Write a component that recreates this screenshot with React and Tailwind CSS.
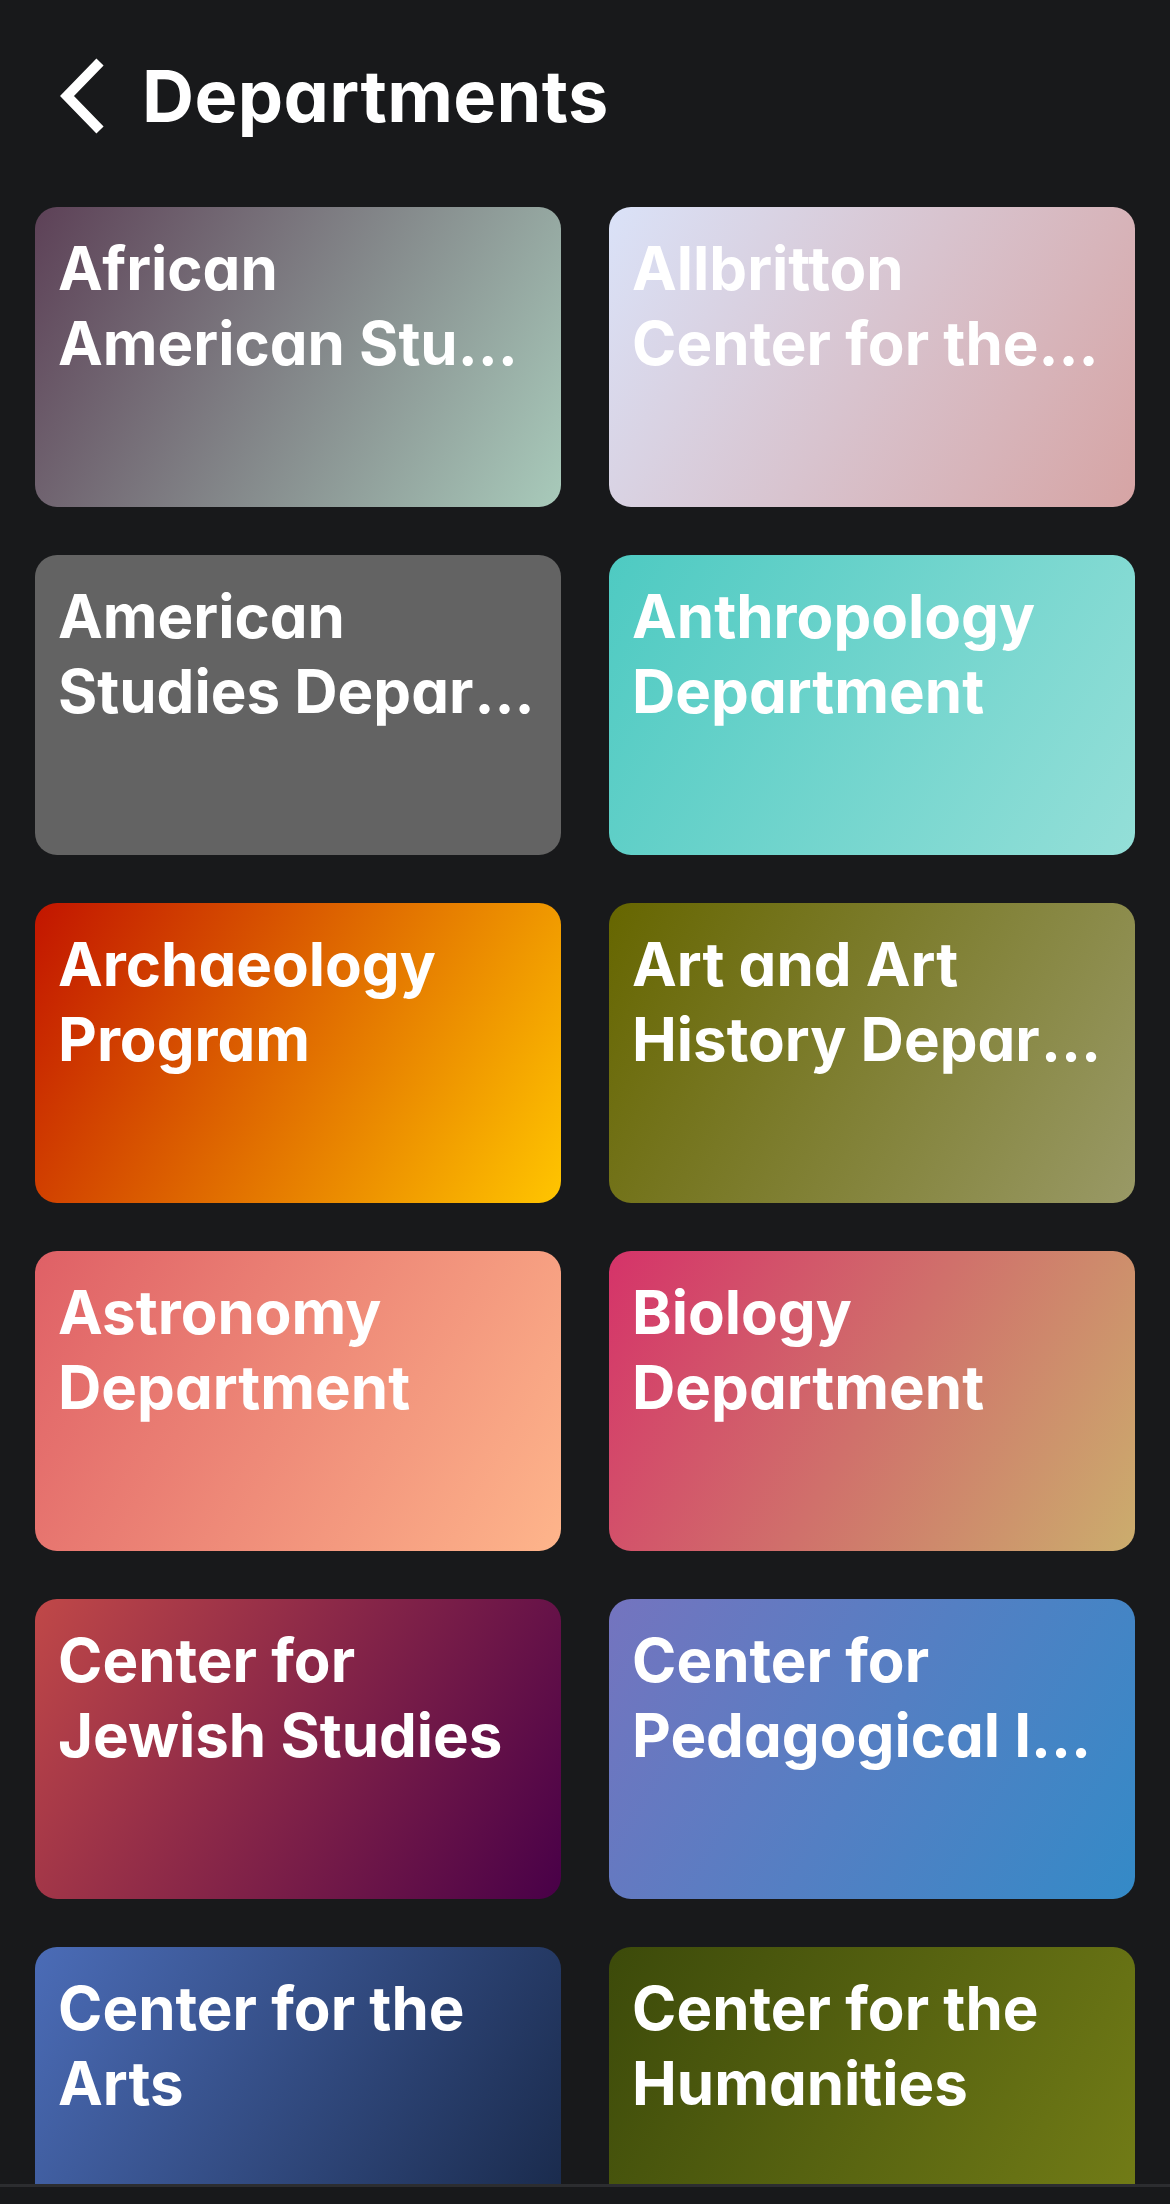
import React from "react";

const departments = [
  { l1: "African", l2: "American Studies Program", bg: "bg-[linear-gradient(120deg,#5d4157,#a8caba)]" },
  { l1: "Allbritton", l2: "Center for the Study of Public Life", bg: "bg-[linear-gradient(120deg,#dae2f8,#d6a4a4)]" },
  { l1: "American", l2: "Studies Department", bg: "bg-[#636363]" },
  { l1: "Anthropology", l2: "Department", bg: "bg-[linear-gradient(120deg,#4ecac2,#94dfd8)]" },
  { l1: "Archaeology", l2: "Program", bg: "bg-[linear-gradient(120deg,#c21500,#ffc500)]" },
  { l1: "Art and Art", l2: "History Department", bg: "bg-[linear-gradient(120deg,#666600,#999966)]" },
  { l1: "Astronomy", l2: "Department", bg: "bg-[linear-gradient(120deg,#df6066,#feb58b)]" },
  { l1: "Biology", l2: "Department", bg: "bg-[linear-gradient(120deg,#d53369,#cbad6d)]" },
  { l1: "Center for", l2: "Jewish Studies", bg: "bg-[linear-gradient(120deg,#c04848,#480048)]" },
  { l1: "Center for", l2: "Pedagogical Innovation", bg: "bg-[linear-gradient(120deg,#7474bf,#348ac7)]" },
  { l1: "Center for the", l2: "Arts", bg: "bg-[linear-gradient(120deg,#4b6cb7,#182848)]" },
  { l1: "Center for the", l2: "Humanities", bg: "bg-[linear-gradient(120deg,#3c4a0a,#747e17)]" },
];

export default function App() {
  return (
    <div className="flex h-[2204px] w-[1170px] flex-col overflow-hidden bg-[#18191b] font-['Inter','Noto_Sans',sans-serif] text-white [font-feature-settings:'cv11']">
      <main className="flex-1 overflow-hidden">
        <header className="flex items-center gap-[37px] pl-[59px] pt-[52px] pb-[67px]">
          <svg width="46" height="76" viewBox="0 0 46 76" fill="none" aria-hidden="true">
            <path d="M41 4 L8 38 L41 72" stroke="#ffffff" strokeWidth="10" strokeLinecap="butt" strokeLinejoin="miter" />
          </svg>
          <h1 className="text-[72px] leading-[88px] font-bold tracking-[0.4px]">Departments</h1>
        </header>
        <div className="grid grid-cols-2 gap-[48px] px-[35px]">
          {departments.map((d) => (
            <div key={d.l1 + d.l2} className={`h-[300px] min-w-0 rounded-[22px] px-[23px] pt-[24px] ${d.bg}`}>
              <p className="text-[60px] leading-[75px] font-bold">
                <span className="block truncate">{d.l1}</span>
                <span className="block truncate">{d.l2}</span>
              </p>
            </div>
          ))}
        </div>
      </main>
      <footer className="h-[20px] shrink-0 border-t-[3px] border-[#2c2d30] bg-[#18191b]" />
    </div>
  );
}
